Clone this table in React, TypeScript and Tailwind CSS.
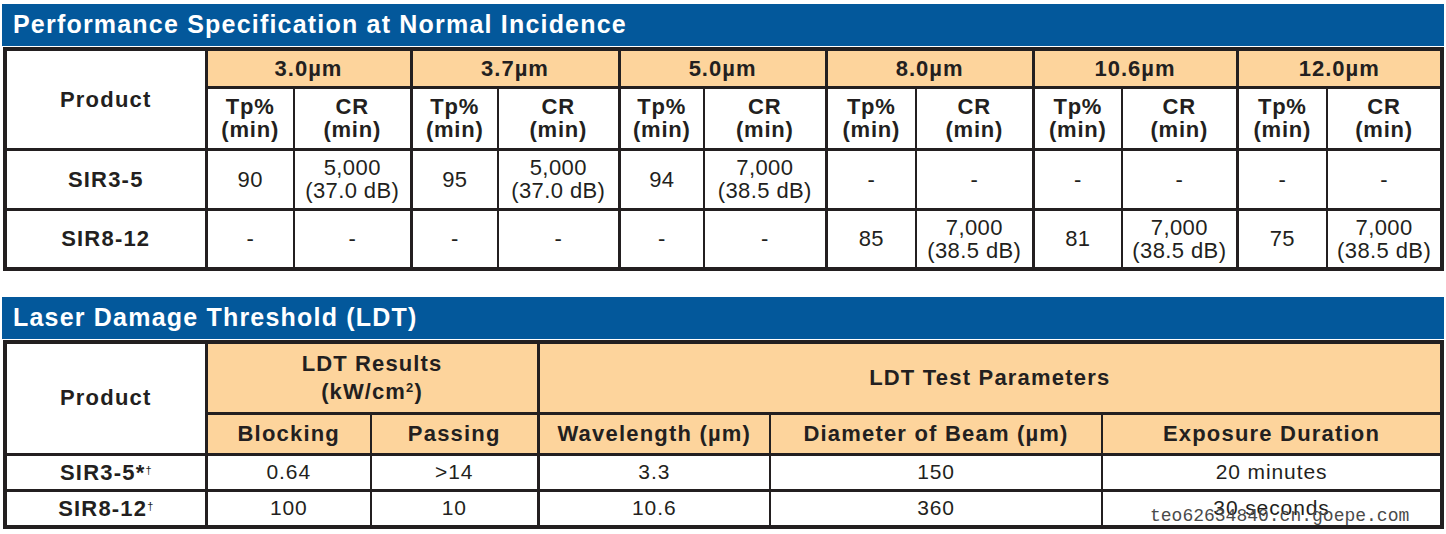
const BLUE = 'bg-[#03589b]';

const waves = ['3.0µm', '3.7µm', '5.0µm', '8.0µm', '10.6µm', '12.0µm'];
const perfCols = [201, 88, 117, 87, 121, 85, 122, 90, 117, 89, 115, 90, 115];

const perfRows = [
  {
    name: 'SIR3-5',
    cells: [
      ['90'], ['5,000', '(37.0 dB)'],
      ['95'], ['5,000', '(37.0 dB)'],
      ['94'], ['7,000', '(38.5 dB)'],
      ['-'], ['-'], ['-'], ['-'], ['-'], ['-'],
    ],
  },
  {
    name: 'SIR8-12',
    cells: [
      ['-'], ['-'], ['-'], ['-'], ['-'], ['-'],
      ['85'], ['7,000', '(38.5 dB)'],
      ['81'], ['7,000', '(38.5 dB)'],
      ['75'], ['7,000', '(38.5 dB)'],
    ],
  },
];

const ldtCols = [201, 165, 167, 232, 332, 340];

const ldtRows = [
  { name: 'SIR3-5', mark: '*', cells: ['0.64', '>14', '3.3', '150', '20 minutes'] },
  { name: 'SIR8-12', mark: '', cells: ['100', '10', '10.6', '360', '30 seconds'] },
];

function SectionTitle({ children }: { children: string }) {
  return (
    <div className={`${BLUE} h-[42px] w-[1442px] flex items-center pl-[11px] text-[25px] font-bold tracking-[1.2px] text-white`}>
      {children}
    </div>
  );
}

export default function App() {
  return (
    <div
      className="relative w-[1446px] h-[534px] bg-white pl-[2px] pt-[4px] text-[#231f20]"
      style={{ fontFamily: '"Liberation Sans", Arial, sans-serif' }}
    >
      <SectionTitle>Performance Specification at Normal Incidence</SectionTitle>
      <table className="ml-[1px] mt-[1px] w-[1438px] table-fixed border-collapse border-[4px] border-[#231f20] text-center">
        <colgroup>
          {perfCols.map((w, i) => (
            <col key={i} style={{ width: w }} />
          ))}
        </colgroup>
        <tbody>
          <tr className="h-[38px]">
            <td rowSpan={2} className="border-r-[3px] border-b-[3px] border-[#231f20] bg-white text-[22px] font-bold tracking-[1.2px]">
              Product
            </td>
            {waves.map((w) => (
              <td key={w} colSpan={2} className="border-x-[3px] border-b-[3px] border-[#231f20] bg-[#fdd49c] text-[22px] font-bold tracking-[1px]">
                {w}
              </td>
            ))}
          </tr>
          <tr className="h-[62px]">
            {waves.map((w) => [
              <td key={w + 'tp'} className="border-l-[3px] border-r-2 border-b-[3px] border-[#231f20] text-[22px] font-bold leading-[23px] tracking-[0.8px]">
                Tp%
                <br />
                (min)
              </td>,
              <td key={w + 'cr'} className="border-r-[3px] border-b-[3px] border-[#231f20] text-[22px] font-bold leading-[23px] tracking-[0.8px]">
                CR
                <br />
                (min)
              </td>,
            ])}
          </tr>
          {perfRows.map((r) => (
            <tr key={r.name} className="h-[60px]">
              <td className="border-r-[3px] border-b-[3px] border-[#231f20] text-[22px] font-bold tracking-[1.2px]">{r.name}</td>
              {r.cells.map((c, i) => (
                <td
                  key={i}
                  className={`border-b-[3px] border-[#231f20] text-[22px] leading-[23px] tracking-[0.4px] ${
                    i % 2 === 0 ? 'border-l-[3px] border-r-2' : 'border-r-[3px]'
                  }`}
                >
                  {c.map((line, j) => (
                    <div key={j}>{line}</div>
                  ))}
                </td>
              ))}
            </tr>
          ))}
        </tbody>
      </table>

      <div className="mt-[26px]">
        <SectionTitle>Laser Damage Threshold (LDT)</SectionTitle>
      </div>
      <table className="ml-[1px] mt-[1px] w-[1438px] table-fixed border-collapse border-[4px] border-[#231f20] text-center">
        <colgroup>
          {ldtCols.map((w, i) => (
            <col key={i} style={{ width: w }} />
          ))}
        </colgroup>
        <tbody>
          <tr className="h-[71px]">
            <td rowSpan={2} className="border-r-[3px] border-b-[3px] border-[#231f20] bg-white pb-[1px] text-[22px] font-bold tracking-[1.2px]">
              Product
            </td>
            <td colSpan={2} className="border-x-[3px] border-b-[3px] border-[#231f20] bg-[#fdd49c] text-[22px] font-bold leading-[28px] tracking-[1.1px]">
              LDT Results
              <br />
              (kW/cm<sup className="text-[13px]">2</sup>)
            </td>
            <td colSpan={3} className="border-b-[3px] border-[#231f20] bg-[#fdd49c] text-[22px] font-bold tracking-[1.2px]">
              LDT Test Parameters
            </td>
          </tr>
          <tr className="h-[41px]">
            {['Blocking', 'Passing', 'Wavelength (µm)', 'Diameter of Beam (µm)', 'Exposure Duration'].map((h, i) => (
              <td
                key={h}
                className={`border-b-[3px] border-[#231f20] bg-[#fdd49c] text-[22px] font-bold tracking-[1.2px] ${
                  i === 1 ? 'border-r-[3px]' : 'border-r-2'
                }`}
              >
                {h}
              </td>
            ))}
          </tr>
          {ldtRows.map((r) => (
            <tr key={r.name} className="h-[36px]">
              <td className="border-r-[3px] border-b-[3px] border-[#231f20] text-[22px] font-bold tracking-[1.2px]">
                {r.name}
                {r.mark}
                <sup className="text-[11px] font-normal tracking-normal">†</sup>
              </td>
              {r.cells.map((c, i) => (
                <td
                  key={i}
                  className={`border-b-[3px] border-[#231f20] text-[21px] tracking-[0.9px] ${i === 1 ? 'border-r-[3px]' : 'border-r-2'}`}
                >
                  {c}
                </td>
              ))}
            </tr>
          ))}
        </tbody>
      </table>

      <div
        className="absolute left-[1150px] top-[505px] text-[18px] leading-[22px] text-[#4a4a4a]"
        style={{ fontFamily: '"Liberation Mono", "Courier New", monospace' }}
      >
        teo62634840.cn.goepe.com
      </div>
    </div>
  );
}
